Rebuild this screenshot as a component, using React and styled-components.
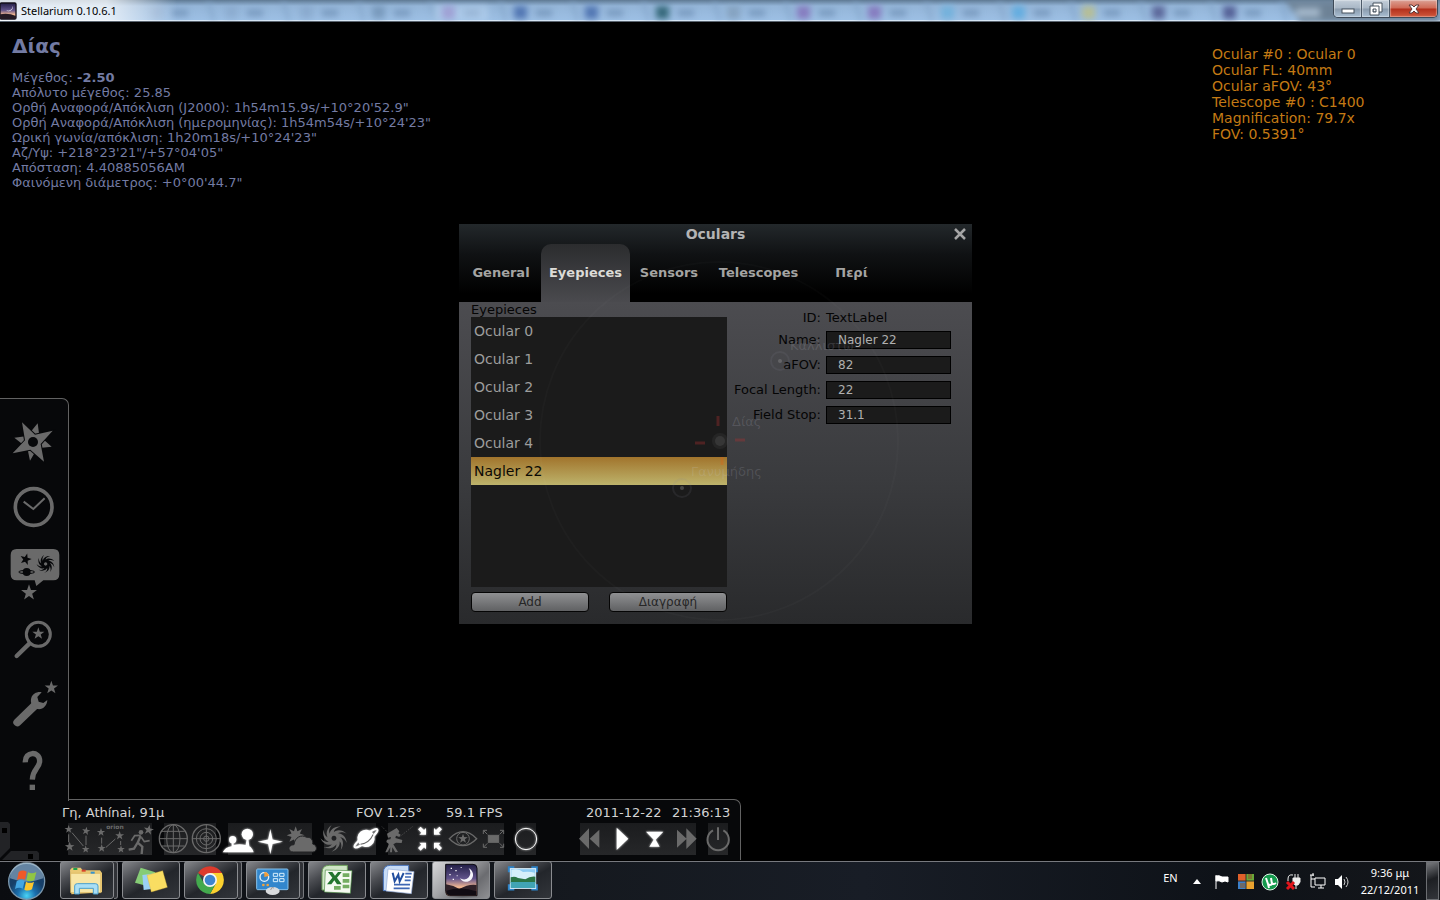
import React, { useState } from 'react';
import styled, { createGlobalStyle, css } from 'styled-components';

const GlobalStyle = createGlobalStyle`
  *, *::before, *::after { box-sizing: border-box; }
  body {
    margin: 0;
    background: #000;
    font-family: "DejaVu Sans", sans-serif;
    font-size: 13px;
  }
  button, input { font: inherit; color: inherit; margin: 0; }
  button { padding: 0; border: 0; background: none; cursor: pointer; }
  svg { display: block; overflow: visible; }
`;

const Screen = styled.div`
  display: flex;
  flex-direction: column;
  min-height: 100vh;
  overflow: hidden;
`;

/* ---------- window title bar ---------- */

const TitleBar = styled.header`
  position: relative;
  display: flex;
  justify-content: space-between;
  height: 22px;
  overflow: hidden;
  background: linear-gradient(#5f7a94, #94b5d8 6px, #9dc0e5);
  border-bottom: 1px solid #5b6570;
  box-shadow: inset 0 -1px #d9e8f6;
`;

const Glass = styled.svg`
  position: absolute;
  inset: 0;
  filter: blur(3px);
`;

const AppName = styled.div`
  position: relative;
  display: flex;
  align-items: center;
  gap: 5px;
  padding-right: 60px;
  font: 11px/20px "Noto Sans", "Open Sans", sans-serif;
  color: #000;
  background: linear-gradient(90deg, rgba(255, 255, 255, 0.75) 60%, transparent);
`;

const WindowButtons = styled.div`
  position: relative;
  display: flex;
  align-self: flex-start;
  height: 18px;
  margin-right: 2px;
  border: 1px solid #3d4957;
  border-top: 0;
  border-radius: 0 0 5px 5px;
  overflow: hidden;
`;

const WindowButton = styled.button`
  display: flex;
  align-items: center;
  justify-content: center;
  width: ${p => (p.$close ? 47 : 28)}px;
  border-right: ${p => (p.$close ? 0 : '1px solid #4c5a69')};
  background: ${p =>
    p.$close
      ? 'linear-gradient(#dba194, #cf6a56 8px, #b3301c 9px, #d0583c)'
      : 'linear-gradient(#c3ced9, #a9b7c6 8px, #8a9bad 9px, #a9bed2)'};
  box-shadow: inset 0 0 1px 1px rgba(255, 255, 255, 0.35);
`;

/* ---------- sky view ---------- */

const Sky = styled.main`
  position: relative;
  flex: 1;
  display: flex;
  flex-direction: column;
  justify-content: space-between;
`;

const Hud = styled.div`
  display: flex;
  justify-content: space-between;
  padding: 12px 73px 0 12px;
`;

const ObjectInfo = styled.section`
  color: #737ba3;
  line-height: 15px;

  h1 {
    margin: 0 0 12px;
    font-size: 20px;
    line-height: 24px;
  }
  p { margin: 0; }
`;

const OcularInfo = styled.section`
  width: 155px;
  padding-top: 12px;
  color: #c47a14;
  font-size: 14px;
  line-height: 16px;
  white-space: nowrap;

  p { margin: 0; }
`;

const Panels = styled.div`
  display: flex;
  flex-direction: column;
  align-items: flex-start;
`;

const SideBar = styled.nav`
  z-index: 1;
  display: flex;
  flex-direction: column;
  gap: 6px;
  width: 69px;
  margin-bottom: -2px;
  padding-top: 12px;
  background: #07080a;
  border: solid #626262;
  border-width: 1px 1px 0 0;
  border-radius: 0 7px 0 0;
`;

const SideButton = styled.button`
  display: flex;
  align-items: center;
  justify-content: center;
  width: 66px;
  height: 60px;
`;

const BottomBar = styled.section`
  position: relative;
  padding: 0 6px 5px 62px;
  background: #07080a;
  border: solid #626262;
  border-width: 1px 1px 0 0;
  border-radius: 0 7px 0 0;
`;

const Status = styled.div`
  position: relative;
  z-index: 2;
  display: grid;
  grid-template-columns: 294px 90px 140px 86px auto;
  line-height: 25px;
  height: 23px;
  color: #d3d3d3;
`;

const Tools = styled.div`
  display: flex;
`;

const ToolGroup = styled.div`
  display: flex;
  margin-left: ${p => (p.$apart ? 32 : 0)}px;
  background: linear-gradient(#1b1c1e, #262729) center / calc(100% - 12px) 100% no-repeat;
`;

const ToolButton = styled.button`
  width: 32px;
  height: 32px;
  color: ${p => (p.$on ? '#fff' : '#6a6a6a')};
  ${p => p.$on && css`filter: drop-shadow(0 0 1px rgba(255, 255, 255, 0.8));`}
`;

const HideHandles = styled.svg`
  position: absolute;
  left: 0;
  bottom: 0;
`;

/* ---------- oculars dialog ---------- */

const Dialog = styled.section`
  position: absolute;
  top: 202px;
  left: calc(50% - 261px);
  width: 513px;
  z-index: 2;
`;

const DialogHead = styled.header`
  background: linear-gradient(#23282b, #101214 30px, #000 70px);
`;

const DialogTitle = styled.div`
  display: grid;
  grid-template-columns: 24px 1fr 24px;
  align-items: center;
  height: 20px;
  color: #b4b4b4;

  h2 {
    margin: 0;
    font-size: 14px;
    line-height: 20px;
    text-align: center;
  }
`;

const CloseButton = styled.button`
  display: flex;
  justify-content: center;
`;

const Tabs = styled.div`
  display: grid;
  grid-template-columns: 80px 89px 78px 101px 85px;
  height: 58px;
  padding-left: 2px;
`;

const Tab = styled.button`
  padding-bottom: 2px;
  font-weight: bold;
  color: ${p => (p.$active ? '#dcdcd8' : '#a4a4a2')};
  border-radius: 10px 10px 0 0;
  background: ${p => (p.$active ? 'linear-gradient(#2b2c2e, #4a4a4e)' : 'none')};
`;

const DialogBody = styled.div`
  display: flex;
  padding: 0 21px 12px 12px;
  background: linear-gradient(#4c4c50, #3a3b3e 55%, #292a2c);
  color: #050505;
`;

const ListColumn = styled.div`
  width: 256px;

  h3 {
    margin: 0;
    font-size: 13px;
    font-weight: normal;
    line-height: 15px;
  }
`;

const List = styled.div`
  height: 270px;
  margin-bottom: 5px;
  background: #1b1b1b;
`;

const ListItem = styled.button`
  display: block;
  width: 100%;
  height: 28px;
  padding: 0 3px;
  text-align: left;
  font-size: 14px;
  color: ${p => (p.$selected ? '#0c0a04' : '#9d9d9d')};
  background: ${p => (p.$selected ? 'linear-gradient(#a1742c, #bdb36b)' : 'none')};
`;

const Actions = styled.div`
  display: grid;
  grid-template-columns: 1fr 1fr;
  gap: 20px;
`;

const ActionButton = styled.button`
  height: 20px;
  font-size: 12px;
  line-height: 18px;
  color: #262626;
  border: 1px solid #050505;
  border-radius: 4px;
  background: linear-gradient(#8f9092, #606163);
`;

const Form = styled.form`
  flex: 1;
  display: grid;
  grid-template-columns: 1fr 125px;
  grid-template-rows: 12px;
  grid-auto-rows: 18px;
  align-content: start;
  align-items: center;
  gap: 7px 5px;
  padding-top: 10px;
  line-height: 18px;

  label, span { white-space: nowrap; }
  label { text-align: right; }
`;

const Field = styled.input`
  width: 100%;
  height: 18px;
  padding: 0 11px;
  font-size: 12px;
  color: #b0b0b0;
  background: #1b1b1b;
  border: 1px solid #000;
  border-radius: 0;
`;

const SeeThrough = styled.svg`
  position: absolute;
  left: 0;
  top: 0;
  pointer-events: none;
`;

/* ---------- taskbar ---------- */

const TaskBar = styled.footer`
  display: flex;
  justify-content: space-between;
  height: 40px;
  background: linear-gradient(90deg, #0a0c10, #15191f 40%, #181d26 60%, #0e1218 85%, #14161a);
  border-top: 1px solid #000;
  box-shadow: inset 0 1px #77797e;
`;

const TaskList = styled.div`
  display: flex;
  gap: 4px;
`;

const StartButton = styled.button`
  width: 56px;
`;

const TaskSlot = styled.div`
  display: flex;
  width: 58px;
  height: 38px;
`;

const TaskButton = styled.button`
  flex: 1;
  border: 1px solid #8a8c90;
  border-radius: 3px;
  background: ${p =>
    p.$active
      ? 'linear-gradient(135deg, #d8d8da, #a3a4a7 40%, #6b6c70 70%, #8f9093)'
      : 'linear-gradient(150deg, #85878b, #4b4d52 30%, #23262b 55%, #32353a)'};
`;

const StackEdge = styled.span`
  width: 4px;
  border: 1px solid #77797d;
  border-left: 0;
  border-radius: 0 3px 3px 0;
  background: #303237;
`;

const Tray = styled.div`
  display: flex;
  align-items: center;
  font: 11px/17px "Noto Sans", "Open Sans", sans-serif;
  color: #fff;
`;

const TrayLanguage = styled.button`
  width: 15px;
  margin-right: 8px;
  padding-bottom: 6px;
`;

const TrayButton = styled.button`
  width: 24px;
  height: 24px;
`;

const Clock = styled.time`
  width: 72px;
  text-align: center;
`;

const ShowDesktop = styled.button`
  align-self: stretch;
  width: 13px;
  margin: 1px 1px 0 0;
  border: 1px solid #6c6e72;
  background: linear-gradient(160deg, #77797d, #1d1f23 45%, #33353a);
`;

/* ---------- drawing helpers ---------- */

const starPoints = (cx, cy, r, inner = 0.4, n = 5, turn = 0) =>
  Array.from({ length: n * 2 }, (_, i) => {
    const a = (Math.PI * i) / n - Math.PI / 2 + (turn * Math.PI) / 180;
    const d = i % 2 ? r * inner : r;
    return `${(cx + d * Math.cos(a)).toFixed(1)},${(cy + d * Math.sin(a)).toFixed(1)}`;
  }).join(' ');

const Star = ({ x, y, r, inner, n, turn, ...rest }) => (
  <polygon points={starPoints(x, y, r, inner, n, turn)} {...rest} />
);

const Galaxy = ({ x, y, r, fill }) => (
  <g transform={`translate(${x} ${y}) scale(${r / 20})`} fill={fill}>
    <path fillRule="evenodd" d="M0-10a10 10 0 1 0 .1 0zM0-4a4 4 0 1 1-.1 0z" />
    {[0, 40, 80, 120, 160, 200, 240, 280, 320].map(a => (
      <path key={a} transform={`rotate(${a})`} d="M-7-6C-7-13 0-20 11-19C3-17-1-13 0-8z" />
    ))}
  </g>
);

const GREY = '#6a6a6a';
const DARK = '#07080a';

const sideIcons = [
  ['Location', 75, (
    <g fill={GREY}>
      <path d="M113 100L118 137L155 170L112 175L90 212L82 174L43 143L82 138z" />
      <path d="M66 97L105 134L158 122L122 162L132 215L91 179L38 190L75 151z" stroke={DARK} strokeWidth="6" />
      <path d="M66 97L105 134L158 122L122 162L132 215L91 179L38 190L75 151z" />
      <circle cx="99" cy="156" r="15" fill={DARK} />
    </g>
  )],
  ['Date and time', 273, (
    <g fill="none" stroke={GREY}>
      <circle cx="101" cy="351" r="55" strokeWidth="11" />
      <path d="M71 335L100 357L134 325" strokeWidth="6" />
    </g>
  )],
  ['Sky and viewing options', 471, (
    <g fill={GREY}>
      <path d="M50 477h110q18 0 18 18v58q0 18-18 18h-30L109 588L104 571H50q-18 0-18-18v-58q0-18 18-18z" />
      <Star x={77} y={508} r={18} turn={15} fill={DARK} />
      <circle cx="80" cy="546" r="12" fill={DARK} />
      <ellipse cx="80" cy="546" rx="24" ry="5" fill="none" stroke={DARK} strokeWidth="3" />
      <Galaxy x={137} y={522} r={25} fill={DARK} />
      <Star x={87} y={608} r={25} />
    </g>
  )],
  ['Search', 42, (
    <g fill={GREY} stroke={GREY}>
      <circle cx="115" cy="106" r="36" fill="none" strokeWidth="9" />
      <Star x={115} y={104} r={19} stroke="none" />
      <path d="M50 171L88 134" strokeWidth="13" strokeLinecap="round" />
    </g>
  )],
  ['Configuration', 240, (
    <g fill={GREY}>
      <Star x={154} y={266} r={21} />
      <path d="M52 370L106 318" stroke={GREY} strokeWidth="24" strokeLinecap="round" />
      <path d="M125 280C112 277 99 284 94 296C89 311 98 326 112 330C128 333 141 321 142 303L130 312L116 308L112 294z" />
    </g>
  )],
  ['Help', 438, (
    <g fill={GREY}>
      <path d="M76 490C74 456 119 455 119 486C119 507 98 510 97 542" fill="none" stroke={GREY} strokeWidth="16" />
      <rect x="89" y="557" width="16" height="16" />
    </g>
  )],
];

const line = { fill: 'none', stroke: 'currentColor', strokeWidth: 3 };

const arrowIn = 'M-36-28L-28-36L-18-26L-12-32V-12H-32L-26-18z';

const toolGroups = [
  {
    x: 186,
    tools: [
      ['Constellation lines', false, (
        <g fill="currentColor">
          <Star x={206} y={118} r={13} /><Star x={258} y={123} r={13} turn={10} />
          <Star x={209} y={170} r={15} /><Star x={257} y={178} r={12} />
          <path {...line} d="M206 133V156M216 128L250 168M258 137V165" />
        </g>
      )],
      ['Constellation labels', false, (
        <g fill="currentColor">
          <Star x={303} y={127} r={13} /><Star x={359} y={137} r={14} />
          <Star x={305} y={175} r={13} /><Star x={363} y={178} r={12} />
          <path {...line} d="M305 143V161M318 172L346 147M362 153V165" />
          <text x="345" y="116" fontSize="18" fontWeight="bold" textAnchor="middle">orion</text>
        </g>
      )],
      ['Constellation art', false, (
        <g fill="currentColor">
          <Star x={446} y={120} r={16} turn={10} />
          <circle cx="423" cy="127" r="7" />
          <path {...line} strokeWidth="7" d="M422 137L413 158L427 170L425 192M414 156L402 176L386 179" />
          <path {...line} strokeWidth="5" d="M422 136L404 137L394 152M424 142L433 155L449 152" />
        </g>
      )],
    ],
  },
  {
    x: 474,
    tools: [
      ['Equatorial grid', false, (
        <g {...line}>
          <circle cx="520" cy="146" r="42" strokeWidth="4" /><ellipse cx="520" cy="146" rx="20" ry="42" />
          <path d="M520 104V188M478 146H562M486 124H554M486 168H554" />
        </g>
      )],
      ['Azimuthal grid', false, (
        <g {...line}>
          <circle cx="619" cy="146" r="42" strokeWidth="4" /><circle cx="619" cy="146" r="30" />
          <circle cx="619" cy="146" r="19" /><circle cx="619" cy="146" r="8" />
          <path d="M619 104V188M577 146H661" />
        </g>
      )],
    ],
  },
  {
    x: 666,
    tools: [
      ['Ground', true, (
        <g fill="currentColor">
          <path d="M668 187Q676 171 695 169V156H701V165Q718 160 737 165L740 146H745L748 169Q756 173 761 187z" />
          <circle cx="698" cy="149" r="11" /><circle cx="742" cy="133" r="17" />
        </g>
      )],
      ['Cardinal points', true, <Star x={811} y={155} r={38} n={4} inner={0.25} fill="currentColor" />],
      ['Atmosphere', false, (
        <g fill="currentColor">
          <Star x={887} y={136} r={27} n={8} inner={0.5} />
          <path stroke="#222325" strokeWidth="3" d="M880 186C862 186 862 164 882 164C884 142 904 132 920 142C932 140 940 150 938 162C954 166 952 186 938 186z" />
        </g>
      )],
    ],
  },
  {
    x: 954,
    tools: [
      ['Nebulas', false, <Galaxy x={1002} y={145} r={37} fill="currentColor" />],
      ['Planet labels', true, (
        <g transform="rotate(-38 1098 145)">
          <circle cx="1098" cy="145" r="26" fill="currentColor" />
          <ellipse cx="1098" cy="145" rx="43" ry="9" {...line} strokeWidth="6" />
          <path d="M1074 149Q1098 162 1122 149" fill="none" stroke="#666" strokeWidth="3" />
        </g>
      )],
    ],
  },
  {
    x: 36,
    tools: [
      ['Equatorial mount', false, (
        <g fill="currentColor">
          <path d="M51 131L80 114L88 124L85 130L92 134L88 141L78 137L76 144L97 150L95 159L78 158L70 163L84 186L76 187L67 172L66 187H60L61 172L52 187H46L57 162L49 156L51 149L61 148L63 141L54 143z" />
          <path {...line} strokeWidth="2" strokeDasharray="3 4" d="M92 138L130 108M36 110L52 126" />
        </g>
      )],
      ['Center on selected object', true, (
        <g fill="currentColor" transform="translate(180 146)">
          {[0, 90, 180, 270].map(a => <path key={a} d={arrowIn} transform={`rotate(${a})`} />)}
        </g>
      )],
      ['Night mode', false, (
        <g {...line}>
          <path strokeWidth="4" d="M238 146Q279 104 320 146Q279 188 238 146z" />
          <circle cx="279" cy="146" r="19" /><Star x={279} y={146} r={15} fill="currentColor" stroke="none" />
        </g>
      )],
      ['Full-screen mode', false, (
        <g {...line}>
          <rect x="355" y="136" width="31" height="21" fill="currentColor" />
          <path d="M352 133L341 122M389 133L400 122M352 160L341 171M389 160L400 171" />
          <path d="M340 132V121H351M390 121H401V132M340 161V172H351M390 172H401V161" />
        </g>
      )],
    ],
  },
  { x: 420, tools: [['Ocular view', true, <circle cx="468" cy="147" r="32" {...line} />]] },
  {
    x: 612,
    apart: true,
    tools: [
      ['Decrease time speed', false, <path fill="currentColor" d="M627 146L657 115V177zM659 146L688 119V173z" />],
      ['Normal time rate', true, <path fill="currentColor" d="M740 113L775 146L740 180z" />],
      ['Set time to now', true, <path fill="currentColor" d="M828 125H880L857 149L869 170H838L851 149z" />],
      ['Increase time speed', false, <path fill="currentColor" d="M921 119L950 146L921 173zM949 115L980 146L949 177z" />],
    ],
  },
  {
    x: 996,
    tools: [['Quit', false, (
      <g {...line} strokeWidth="6"><path d="M1029 121A32 32 0 1 0 1060 121" /><path d="M1044 112V150" /></g>
    )]],
  },
];

const taskIcons = [
  { name: 'Windows Explorer', x: 180, stack: true, art: (
    <>
      <path d="M210 240l6-7h26l6 8h52l6 8v58l-92 6z" fill="#e9c873" />
      <path d="M212 250h90v58h-90z" fill="#f8e6a6" stroke="#d9b55c" strokeWidth="2" />
      <path d="M220 234h12v6h-12z" fill="#1fa04a" /><path d="M245 239h12v6h-12z" fill="#d8432b" /><path d="M272 245h12v6h-12z" fill="#3494d1" />
      <path d="M224 312v-24q0-7 8-7h54q8 0 8 7v24h-14v-17h-42v17z" fill="#a9def5" stroke="#4b9fcc" strokeWidth="3" />
    </>
  ) },
  { name: 'Sticky Notes', x: 366, art: (
    <>
      <path d="M422 233l44 14l-14 44l-47-13z" fill="#86cc76" />
      <path d="M427 255l45-6l7 45l-48 6z" fill="#9bd0f4" />
      <path d="M441 256l47-14l14 50l-48 14z" fill="#f9dd62" stroke="#d6ac35" strokeWidth="1" />
    </>
  ) },
  { name: 'Google Chrome', x: 552, stack: true, art: (
    <g transform="translate(630 270)">
      <path d="M0 0L-36-21A42 42 0 0 1 36-21z" fill="#dc3b2d" />
      <path d="M0-21H36A42 42 0 0 1 0 42L18 10z" fill="#fbd12f" />
      <path d="M-36-21L-18 10L0 20L18 10L0 42A42 42 0 0 1-36-21z" fill="#43a94d" />
      <circle r="21" fill="#f5f5f5" /><circle r="16" fill="#3d84cf" />
    </g>
  ) },
  { name: 'Control Panel', x: 738, stack: true, art: (
    <>
      <rect x="770" y="237" width="94" height="62" rx="3" fill="#3286cc" stroke="#86c2ec" strokeWidth="3" />
      <circle cx="793" cy="261" r="13" fill="none" stroke="#e6f3fc" strokeWidth="4" /><path d="M793 261V246A15 15 0 0 1 807 258z" fill="#f19d3a" />
      <path d="M820 250h13v9h-13zM839 250h13v9h-13zM820 266h13v9h-13zM839 266h13v9h-13z" fill="none" stroke="#d8effc" strokeWidth="3" />
      <circle cx="790" cy="285" r="4" fill="#f1a13b" /><circle cx="803" cy="285" r="4" fill="#f1a13b" />
      <ellipse cx="818" cy="303" rx="21" ry="12" fill="#d9dbde" /><path d="M812 300q2-12 10-6" stroke="#999" fill="none" strokeWidth="3" />
    </>
  ) },
  { name: 'Microsoft Excel', x: 924, art: (
    <>
      <path d="M966 300V248q0-22 22-22h54v74z" fill="#cfe5c6" stroke="#6a9f58" strokeWidth="3" />
      <path d="M976 240l80 2l-5 68l-78-4z" fill="#f4faf1" stroke="#4f8f45" strokeWidth="2" />
      <path d="M1028 250h20v11h-20zM1028 267h20v11h-20zM1028 284h20v11h-20zM1002 288h20v11h-20z" fill="#73ad62" />
      <path d="M984 246h13l8 11l9-11h11l-14 17l14 20h-14l-8-12l-9 12h-13l16-20z" fill="#23752e" />
    </>
  ) },
  { name: 'Microsoft Word', x: 0, art: (
    <>
      <path d="M40 302V248q0-22 22-22h54v76z" fill="#c7dcf6" stroke="#4673bd" strokeWidth="3" />
      <path d="M54 237l78 8l-8 66l-76-8z" fill="#fff" stroke="#93abd6" strokeWidth="2" />
      <path d="M106 251h19M105 261h18M104 271h18M72 284h48M71 295h48" stroke="#3e67b4" strokeWidth="5" />
      <path d="M68 248l6 26l11-20l4 20l12-25" fill="none" stroke="#234f9f" strokeWidth="6" />
    </>
  ) },
  { name: 'Stellarium', x: 186, active: true, art: (
    <>
      <defs>
        <linearGradient id="dusk" x2="0" y2="1">
          <stop offset="0" stopColor="#211d45" /><stop offset=".45" stopColor="#60528a" />
          <stop offset=".72" stopColor="#efb591" /><stop offset="1" stopColor="#f1a563" />
        </linearGradient>
      </defs>
      <path d="M227 223h82q12 0 12 12v82h-82q-12 0-12-12z" fill="url(#dusk)" stroke="#0c0a12" strokeWidth="3" />
      <path d="M228 283q24 4 40 14q28-16 52-12v31h-80q-12-2-12-12z" fill="#2f2128" /><path d="M229 302q44-14 90 2v12h-80q-10-2-10-10z" fill="#100b12" />
      <path d="M296 235A21 21 0 1 1 270 265A20 20 0 0 0 296 235z" fill="#f4f3fa" />
      <path d="M242 233h4v4h-4zM256 240h4v4h-4zM238 252h4v4h-4zM260 256h3v3h-3zM248 266h4v4h-4zM272 231h3v3h-3z" fill="#fff" />
    </>
  ) },
  { name: 'Picture viewer', x: 372, art: (
    <>
      <path d="M419 247v-13h14M484 234h14v13M498 283v13h-14M433 296h-14v-13" stroke="#2d83c8" strokeWidth="11" fill="none" />
      <rect x="421" y="236" width="76" height="59" fill="#8ccbf3" stroke="#e2f2fc" strokeWidth="3" />
      <path d="M424 240q22-6 35 6q18-3 35 2v20h-70z" fill="#d5effa" />
      <path d="M422 262q12-5 22 2l22 4q14-10 30-8v18h-74z" fill="#2b7445" /><path d="M422 276h74v18h-74z" fill="#41a4b4" />
    </>
  ) },
];

const trayIcons = [
  ['Show hidden icons', <path d="M7 15h8l-4-5z" fill="#fff" />],
  ['Action Center', <path d="M6 6v14M6 7q3-1 6 1v5q-3-2-6-1zM12 8h6v5q-3-2-6 0z" fill="#fff" stroke="#fff" />],
  ['Updates', (
    <>
      <path d="M4 5h8v7H4z" fill="#e0602a" /><path d="M12 5h8v7h-8z" fill="#69a838" />
      <path d="M4 12h8v8H4z" fill="#3c7fc8" /><path d="M12 12h8v8h-8z" fill="#e9a22f" />
      <path d="M6 14h5v5H6zM14 5h4v5h-4z" fill="#8a5a2c" fillOpacity=".6" /><path d="M12 5v15M4 12h16" stroke="#34312b" />
    </>
  )],
  ['uTorrent', (
    <>
      <circle cx="12" cy="13" r="8" fill="#159a4d" stroke="#dff3e6" />
      <path d="M8 9l2 6q2 2 4 0l-1-6M14 14q1 2 4 0M10 15l1 4" fill="none" stroke="#fff" strokeWidth="2" />
    </>
  )],
  ['Power', (
    <>
      <path d="M11 6q-5-1-5 4v2" fill="none" stroke="#eee" />
      <path d="M11 9h7v4l-2 3h-3l-2-3zM13 5v4M16 5v4M14 16v4" fill="#eee" stroke="#eee" />
      <path d="M5 13l7 7M12 13l-7 7" stroke="#e0141b" strokeWidth="3" />
    </>
  )],
  ['Network', <path d="M9 9h10v7H9zM12 19h6M15 16v3M5 6v4h4M5 10v8h4M4 6h4M7 4v3" fill="none" stroke="#fff" />],
  ['Volume', (
    <>
      <path d="M5 10h3l4-4v14l-4-4H5z" fill="#fff" />
      <path d="M14 10q2 3 0 6M16 8q4 5 0 10" fill="none" stroke="#ccc" />
    </>
  )],
];

// blurred browser tabs behind the glass: [x, icon colour]
const glassTabs = [
  [150, '#8aa3c4'], [225, '#7d9abf'], [300, '#7896b8'], [372, '#4b6c8c'], [442, '#8474bb'], [514, '#4a6fae'],
  [585, '#4a6fae'], [656, '#2b6070'], [727, '#83a0bd'], [797, '#8474bb'], [868, '#8474bb'],
  [941, '#6fb0dc'], [1012, '#5eace0'], [1082, '#b9bf8e'], [1152, '#555f93'], [1223, '#4e578f'],
];

const eyepieces = ['Ocular 0', 'Ocular 1', 'Ocular 2', 'Ocular 3', 'Ocular 4', 'Nagler 22'];
const tabs = ['General', 'Eyepieces', 'Sensors', 'Telescopes', 'Περί'];

const fields = [
  ['name', 'Name:', 'Nagler 22'],
  ['afov', 'aFOV:', '82'],
  ['focal', 'Focal Length:', '22'],
  ['stop', 'Field Stop:', '31.1'],
];

const OcularsDialog = () => {
  const [tab, setTab] = useState('Eyepieces');
  const [selected, setSelected] = useState('Nagler 22');

  return (
    <Dialog role="dialog" aria-label="Oculars">
      <DialogHead>
        <DialogTitle>
          <span />
          <h2>Oculars</h2>
          <CloseButton aria-label="Close">
            <svg width="14" height="14" viewBox="0 0 14 14">
              <path d="M2 2L12 12M12 2L2 12" stroke="#a5a5a5" strokeWidth="2.500" />
            </svg>
          </CloseButton>
        </DialogTitle>
        <Tabs role="tablist">
          {tabs.map(name => (
            <Tab key={name} role="tab" $active={name === tab} onClick={() => setTab(name)}>{name}</Tab>
          ))}
        </Tabs>
      </DialogHead>
      <DialogBody>
        <ListColumn>
          <h3>Eyepieces</h3>
          <List role="listbox" aria-label="Eyepieces">
            {eyepieces.map(name => (
              <ListItem
                key={name}
                role="option"
                $selected={name === selected}
                onClick={() => setSelected(name)}
              >
                {name}
              </ListItem>
            ))}
          </List>
          <Actions>
            <ActionButton>Add</ActionButton>
            <ActionButton>Διαγραφή</ActionButton>
          </Actions>
        </ListColumn>
        <Form onSubmit={e => e.preventDefault()}>
          <label>ID:</label>
          <span>TextLabel</span>
          {fields.map(([id, label, value]) => (
            <React.Fragment key={id}>
              <label htmlFor={id}>{label}</label>
              <Field id={id} defaultValue={value} />
            </React.Fragment>
          ))}
        </Form>
      </DialogBody>
      {/* Jupiter and its moons shining through the translucent dialog */}
      <SeeThrough width="513" height="400" viewBox="459 224 513 400">
        <circle cx="719" cy="441" r="179" fill="none" stroke="#fff" strokeOpacity=".018" strokeWidth="2" />
        <g stroke="#b03030" strokeOpacity=".35" strokeWidth="3">
          <path d="M718 416v10M695 443h10M735 440h10" />
          <path d="M722 457v8" stroke="#e06010" />
        </g>
        <circle cx="720" cy="441" r="8" fill="#777" fillOpacity=".12" />
        <circle cx="720" cy="441" r="5" fill="#999" fillOpacity=".15" />
        <g fill="none" stroke="#889" strokeOpacity=".12" strokeWidth="2">
          <circle cx="780" cy="361" r="9" /><circle cx="682" cy="488" r="9" />
        </g>
        <g fill="#aaa" fillOpacity=".3"><circle cx="780" cy="361" r="2" /><circle cx="682" cy="488" r="2" /></g>
        <g fill="#ccd" fillOpacity=".16" fontSize="13">
          <text x="732" y="426">Δίας</text>
          <text x="691" y="476">Γανυμήδης</text>
          <text x="790" y="350">Καλλιστώ</text>
        </g>
      </SeeThrough>
    </Dialog>
  );
};

const App = () => {
  return (
    <Screen>
      <GlobalStyle />
      <TitleBar>
        <Glass width="100%" height="22">
          {glassTabs.map(([x, color]) => (
            <g key={x}>
              <rect x={x} y="6" width="13" height="13" fill={color} fillOpacity={x < 400 ? 0.4 : 0.9} />
              <rect x={x + 22} y="10" width="16" height="6" fill="#5f7fa5" fillOpacity=".6" />
              <path d={`M${x + 58} 2l6 18`} stroke="#83a4c8" strokeWidth="3" />
            </g>
          ))}
          <rect x="434" y="5" width="54" height="16" fill="#cfe6fb" fillOpacity=".35" />
          <path d="M1285 0h155v22h-140z" fill="#6d8296" />
          <rect x="1296" y="8" width="24" height="9" fill="#a4b8cb" />
        </Glass>
        <AppName>
          <svg width="16" height="16" viewBox="226 222 96 96">
            <rect x="226" y="222" width="96" height="96" rx="8" fill="url(#dusk)" stroke="#14101c" strokeWidth="8" />
            <path d="M226 290q50-10 96 10v18h-96z" fill="#241a24" />
            <path d="M296 235A21 21 0 1 1 262 262A22 22 0 0 0 296 235z" fill="#fff" />
          </svg>
          <span>Stellarium 0.10.6.1</span>
        </AppName>
        <WindowButtons>
          <WindowButton aria-label="Minimize">
            <svg width="12" height="12"><rect x="0" y="6" width="12" height="4" fill="#fff" stroke="#47525e" /></svg>
          </WindowButton>
          <WindowButton aria-label="Restore">
            <svg width="12" height="12" fill="#fff" stroke="#47525e">
              <path d="M3 0h9v9H3z" /><path fillRule="evenodd" d="M0 3h9v9H0zM3 6v3h3V6z" />
            </svg>
          </WindowButton>
          <WindowButton $close aria-label="Close window">
            <svg width="12" height="12">
              <path d="M1 2h3l2 2l2-2h3L8 6l3 4H8L6 8l-2 2H1l3-4z" fill="#fff" stroke="#5a3a3a" />
            </svg>
          </WindowButton>
        </WindowButtons>
      </TitleBar>

      <Sky>
        <Hud>
          <ObjectInfo>
            <h1>Δίας</h1>
            <p>Μέγεθος: <b>-2.50</b></p>
            <p>Απόλυτο μέγεθος: 25.85</p>
            <p>Ορθή Αναφορά/Απόκλιση (J2000): 1h54m15.9s/+10°20'52.9"</p>
            <p>Ορθή Αναφορά/Απόκλιση (ημερομηνίας): 1h54m54s/+10°24'23"</p>
            <p>Ωρική γωνία/απόκλιση: 1h20m18s/+10°24'23"</p>
            <p>Αζ/Υψ: +218°23'21"/+57°04'05"</p>
            <p>Απόσταση: 4.40885056AM</p>
            <p>Φαινόμενη διάμετρος: +0°00'44.7"</p>
          </ObjectInfo>
          <OcularInfo>
            <p>Ocular #0 : Ocular 0</p>
            <p>Ocular FL: 40mm</p>
            <p>Ocular aFOV: 43°</p>
            <p>Telescope #0 : C1400</p>
            <p>Magnification: 79.7x</p>
            <p>FOV: 0.5391°</p>
          </OcularInfo>
        </Hud>

        <OcularsDialog />

        <Panels>
          <SideBar>
            {sideIcons.map(([name, y, art]) => (
              <SideButton key={name} aria-label={name}>
                <svg width="52" height="52" viewBox={`21 ${y} 156 156`}>{art}</svg>
              </SideButton>
            ))}
          </SideBar>
          <BottomBar>
            <HideHandles width="39" height="38" viewBox="0 0 39 38">
              <path d="M0 0h8l2 2v24L0 36zM2 38L11 29H37l2 2v7z" fill="#222326" />
              <path d="M2 6h5v5H2zM28 32h5v5h-5z" fill="#000" />
            </HideHandles>
            <Status>
              <span>Γη, Athínai, 91μ</span>
              <span>FOV 1.25°</span>
              <span>59.1 FPS</span>
              <span>2011-12-22</span>
              <span>21:36:13</span>
            </Status>
            <Tools>
              {toolGroups.map(group => (
                <ToolGroup key={group.x} $apart={group.apart}>
                  {group.tools.map(([name, on, art], i) => (
                    <ToolButton key={name} $on={on} aria-label={name}>
                      <svg width="32" height="32" viewBox={`${group.x + i * 96} 99 96 96`}>{art}</svg>
                    </ToolButton>
                  ))}
                </ToolGroup>
              ))}
            </Tools>
          </BottomBar>
        </Panels>
      </Sky>

      <TaskBar>
        <TaskList>
          <StartButton aria-label="Start">
            <svg width="56" height="38" viewBox="0 213 168 114">
              <defs>
                <radialGradient id="orb" cy=".9">
                  <stop offset="0" stopColor="#49d3f5" /><stop offset=".5" stopColor="#1a6fae" /><stop offset="1" stopColor="#173f68" />
                </radialGradient>
              </defs>
              <circle cx="80" cy="271" r="54" fill="url(#orb)" stroke="#7b97ac" strokeWidth="4" />
              <path d="M30 262A50 50 0 0 1 130 262Q80 282 30 262z" fill="#c3d9e8" fillOpacity=".45" />
              <path d="M56 243q12-8 24-1l-5 24q-12-6-24 1z" fill="#ee5a28" />
              <path d="M84 244q12 6 25-1l-6 24q-12 7-24 1z" fill="#90c543" />
              <path d="M50 271q12-7 24-1l-6 23q-11-6-23 1z" fill="#43a6e3" />
              <path d="M78 272q12 7 24 0l-6 23q-12 7-23 1z" fill="#fcc62e" />
            </svg>
          </StartButton>
          {taskIcons.map(task => (
            <TaskSlot key={task.name}>
              <TaskButton $active={task.active} aria-label={task.name}>
                <svg width="100%" height="36" viewBox={`${task.x + 3} 216 ${task.stack ? 156 : 168} 108`}>
                  {task.art}
                </svg>
              </TaskButton>
              {task.stack && <StackEdge />}
            </TaskSlot>
          ))}
        </TaskList>
        <Tray>
          <TrayLanguage>EN</TrayLanguage>
          {trayIcons.map(([name, art]) => (
            <TrayButton key={name} aria-label={name}>
              <svg width="24" height="24" viewBox="0 0 24 24">{art}</svg>
            </TrayButton>
          ))}
          <Clock>
            9:36 μμ<br />22/12/2011
          </Clock>
          <ShowDesktop aria-label="Show desktop" />
        </Tray>
      </TaskBar>
    </Screen>
  );
};

export default App;
